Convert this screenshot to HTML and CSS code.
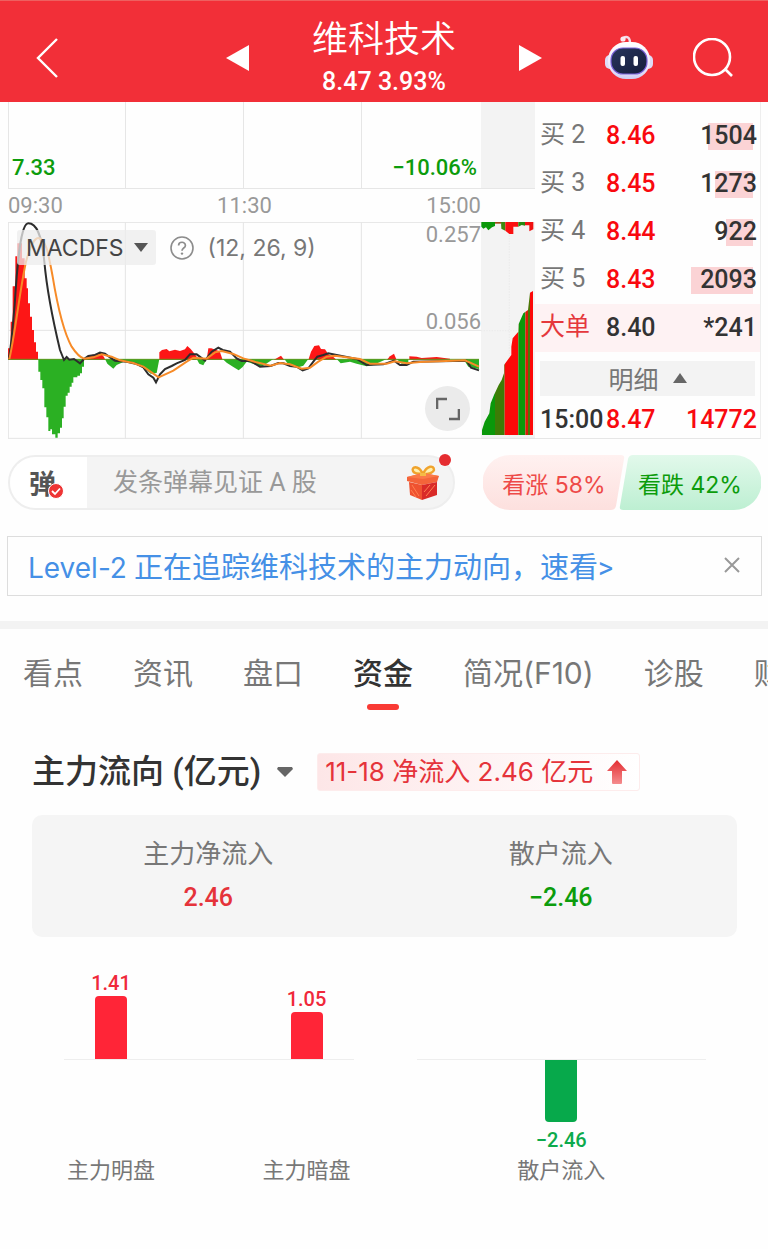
FILE: index.html
```html
<!DOCTYPE html>
<html lang="zh-CN">
<head>
<meta charset="UTF-8" />
<meta name="viewport" content="width=device-width, initial-scale=1" />
<title>维科技术 8.47 3.93%</title>
<link rel="stylesheet" href="styles.css">
</head>
<body>

<header class="topbar">
    <button class="icon-btn back" aria-label="返回">
        <svg width="24" height="40" viewBox="0 0 24 40"><path d="M22 1L3 20L22 39" fill="none" stroke="#fff" stroke-width="2.4"/></svg>
    </button>
    <div class="switcher">
        <button class="icon-btn" aria-label="上一只">
            <svg width="24" height="26" viewBox="0 0 24 26"><path d="M23 0V26L0 13Z" fill="#fff"/></svg>
        </button>
        <div class="stock">
            <h1>维科技术</h1>
            <p>8.47 3.93%</p>
        </div>
        <button class="icon-btn" aria-label="下一只">
            <svg width="24" height="26" viewBox="0 0 24 26"><path d="M1 0V26L24 13Z" fill="#fff"/></svg>
        </button>
    </div>
    <div class="actions">
        <button class="icon-btn" aria-label="智能助手">
            <svg width="48" height="46" viewBox="0 0 48 46">
                <defs>
                    <linearGradient id="head" x1="0" y1="0" x2="0" y2="1"><stop offset="0" stop-color="#fff"/><stop offset=".7" stop-color="#ece6fb"/><stop offset="1" stop-color="#cfcdf3"/></linearGradient>
                    <linearGradient id="face" x1="0" y1="0" x2="1" y2="1"><stop offset="0" stop-color="#28365c"/><stop offset="1" stop-color="#151b3b"/></linearGradient>
                </defs>
                <path d="M18 3C22 1 25 2 25 8" fill="none" stroke="#f3dcea" stroke-width="2.4"/>
                <circle cx="18" cy="4" r="2.6" fill="#fbe9f0"/>
                <rect x="0" y="20" width="10" height="14" rx="5" fill="#dfdcf6"/>
                <rect x="38" y="20" width="10" height="14" rx="5" fill="#dfdcf6"/>
                <rect x="3" y="7" width="42" height="37" rx="18" fill="url(#head)"/>
                <rect x="6" y="13" width="36" height="26" rx="12" fill="url(#face)" stroke="#7a62d8" stroke-width="1.2"/>
                <rect x="15.500" y="21" width="4.500" height="10" rx="2" fill="#fff"/>
                <rect x="28.500" y="21" width="4.500" height="10" rx="2" fill="#fff"/>
            </svg>
        </button>
        <button class="icon-btn" aria-label="搜索">
            <svg width="40" height="40" viewBox="0 0 40 40"><circle cx="19" cy="19" r="18" fill="none" stroke="#fff" stroke-width="2.6"/><path d="M32 31L39 38" stroke="#fff" stroke-width="2.6"/></svg>
        </button>
    </div>
</header>

<section class="market">
    <div class="charts">
        <div class="price-chart">
            <svg class="fill" viewBox="0 0 473 87" preserveAspectRatio="none">
                <path d="M.5 0V87M117.5 0V87M235.5 0V87M353.5 0V87M0 86.5H473" fill="none" stroke="#e6e6e6"/>
            </svg>
            <span class="low">7.33</span>
            <span class="low">−10.06%</span>
        </div>
        <div class="side side-top"></div>
        <div class="times"><span>09:30</span><span>11:30</span><span>15:00</span></div>
        <div class="macd-chart">
            <svg class="fill" viewBox="24 21 1419 651" preserveAspectRatio="none">
                <path d="M25 22V671M376 22V671M730 22V671M1084 22V671M24 22H1443M24 346H1443M24 670H1443" fill="none" stroke="#e4e4e4" stroke-width="3"/>
                <g fill="#fd1616">
                    <path d="M24 435V400H32V320H38V214H46V124H52V85H66V130H74V190H80V220H84V265H90V305H96V345H102V382H108V410H114V435Z"/>
                    <path d="M252 435L262 423L285 418H305L312 426L316 435Z"/>
                    <path d="M478 435V412L486 405L500 402L508 409L525 404L540 408L555 403L562 393L572 402L580 412L590 425V435Z"/>
                    <path d="M620 435L625 400H634L650 406L660 412L668 435Z"/>
                    <path d="M820 435L830 430L843 422L853 435Z"/>
                    <path d="M925 435L933 410L943 393L957 391L963 402L975 403L985 418L1000 426L1010 435Z"/>
                    <path d="M1160 435L1170 424L1182 416L1190 435Z"/>
                    <path d="M1228 435V424L1250 425L1265 429L1310 426L1350 431V435Z"/>
                </g>
                <g fill="#2bb023">
                    <path d="M115 432V470H121V495H127V520H133V577H139V607H145V648H151V643H156V658H166V668H173V655H180V638H186V610H191V575H197V542H203V533H209V515H215V503H220V487H232V482H240V475H246V455H252V432Z"/>
                    <path d="M315 432L322 446L340 461L350 450L370 441L400 442L420 450L440 465L452 476L470 474L478 432Z"/>
                    <path d="M590 432L598 446L610 451L620 432Z"/>
                    <path d="M668 432L680 443L700 456L716 466L728 456L740 440L770 450L785 455L820 432Z"/>
                    <path d="M853 432L862 444L880 450L890 458L910 452L925 432Z"/>
                    <path d="M1010 432L1022 445L1050 440L1070 446L1100 454L1120 450L1160 432Z"/>
                    <path d="M1190 432L1205 446L1225 444V432Z"/>
                    <path d="M1390 432L1405 455L1437 462V432Z"/>
                </g>
                <path d="M24 433H1437" stroke="#5f9a24" stroke-width="3"/>
                <path d="M26 430C34 400 38 330 44 270C52 140 62 25 85 25C110 25 125 60 133 140C142 240 162 330 180 405L192 435L200 426L208 434L222 432L240 445L252 432L265 423L285 420L300 413L315 416L330 427L345 437L380 440L410 447L430 457L445 478L460 488L468 502L480 478L495 462L515 453L530 445L555 435L570 418L590 418L615 437L635 410L655 398L668 405L690 410L710 430L725 438L750 437L780 455L812 453L835 444L850 445L870 453L890 455L908 466L925 460L940 440L952 425L970 420L985 415L1010 420L1070 432L1100 450L1150 448L1182 437L1200 450L1220 450L1240 440L1400 437L1413 458L1437 466" fill="none" stroke="#2d2d2d" stroke-width="6"/>
                <path d="M28 432C45 360 60 220 78 140C92 90 102 70 115 69C138 70 146 120 158 185C172 270 190 350 215 395C228 415 240 427 252 431L280 427L305 418L335 425L360 436L400 444L430 455L476 487L520 467L560 440L580 428L620 431L645 412L665 408L700 417L730 430L770 442L812 452L840 444L870 448L905 461L930 458L955 440L980 425L1005 422L1080 432L1110 446L1160 446L1185 439L1220 445L1260 441L1395 436L1437 455" fill="none" stroke="#f78b28" stroke-width="6"/>
            </svg>
            <div class="indicator">
                <button class="indicator-name">MACDFS
                    <svg width="14" height="9" viewBox="0 0 14 9"><path d="M0 0H14L7 9Z" fill="#555"/></svg>
                </button>
                <button class="icon-btn help" aria-label="指标说明">
                    <svg width="24" height="24" viewBox="0 0 24 24"><circle cx="12" cy="12" r="11" fill="none" stroke="#8c8c8c" stroke-width="1.6"/><path d="M8.600 9.500C8.600 5.200 15.400 5.200 15.400 9.400C15.400 12 12 12 12 14.700" fill="none" stroke="#8c8c8c" stroke-width="1.700"/><circle cx="12" cy="17.600" r="1.200" fill="#8c8c8c"/></svg>
                </button>
                <span>(12, 26, 9)</span>
            </div>
            <span class="scale scale-top">0.257</span>
            <span class="scale scale-mid">0.056</span>
            <button class="expand" aria-label="全屏">
                <svg width="24" height="24" viewBox="0 0 24 24"><path d="M1 12V2H11M23 12V22H13" fill="none" stroke="#666" stroke-width="2.600"/></svg>
            </button>
        </div>
        <div class="side">
            <svg class="fill" viewBox="33 366 162 651" preserveAspectRatio="none">
                <defs>
                    <clipPath id="volume"><path d="M36 1005V990L44 965L58 940L62 910L72 885L86 855L95 840L102 820V795L124 765V740L128 715L145 695L146 672L160 640L174 630L180 578L189 573V1005Z"/></clipPath>
                </defs>
                <path d="M118 366V1015M33 692H195" stroke="#e6e6e6" stroke-width="2" stroke-dasharray="4 4"/>
                <path d="M33 1015H195" stroke="#e0e0e0" stroke-width="3"/>
                <path d="M34 366H75V378L66 382L55 391L48 382L40 386L34 380Z" fill="#0a980a"/>
                <path d="M75 366H93V371H75Z" fill="#a04a1a"/>
                <path d="M93 366H106V392L94 386Z" fill="#3c8a0e"/>
                <path d="M106 366H145V380H130V402L118 402L106 392Z" fill="#fb1010"/>
                <path d="M145 366H165V377L155 375L145 380Z" fill="#258a12"/>
                <path d="M165 366H190V388L178 394V376H165Z" fill="#f01010"/>
                <g clip-path="url(#volume)">
                    <path d="M34 560H75V1005H34Z" fill="#0a980a"/>
                    <path d="M75 560H104V1005H75Z" fill="#3d7c06"/>
                    <path d="M104 560H145V1005H104Z" fill="#fc0808"/>
                    <path d="M145 560H166V1005H145Z" fill="#0a980a"/>
                    <path d="M166 560H174V1005H166Z" fill="#d91c08"/>
                    <path d="M174 560H180V1005H174Z" fill="#4c7706"/>
                    <path d="M180 560H190V1005H180Z" fill="#fc0808"/>
                </g>
            </svg>
        </div>
    </div>

    <div class="book">
        <table class="orders">
            <tr><th scope="row">买 2</th><td>8.46</td><td class="qty"><i style="width: 45px"></i><b>1504</b></td></tr>
            <tr><th scope="row">买 3</th><td>8.45</td><td class="qty"><i style="width: 38px"></i><b>1273</b></td></tr>
            <tr><th scope="row">买 4</th><td>8.44</td><td class="qty"><i style="width: 27px"></i><b>922</b></td></tr>
            <tr><th scope="row">买 5</th><td>8.43</td><td class="qty"><i style="width: 62px"></i><b>2093</b></td></tr>
            <tr class="big"><th scope="row">大单</th><td>8.40</td><td class="qty"><b>*241</b></td></tr>
        </table>
        <button class="detail">明细
            <svg width="14" height="10" viewBox="0 0 14 10"><path d="M0 10H14L7 0Z" fill="#666"/></svg>
        </button>
        <table class="orders trades">
            <tr><th scope="row">15:00</th><td>8.47</td><td class="qty"><b>14772</b></td></tr>
        </table>
    </div>
</section>

<section class="social">
    <div class="danmu">
        <button class="danmu-toggle" aria-label="弹幕开关">弹
            <svg class="check" width="16" height="16" viewBox="0 0 16 16"><circle cx="8" cy="8" r="7.500" fill="#ee3434" stroke="#fff"/><path d="M4 8L7 11L12 5.500" fill="none" stroke="#fff" stroke-width="1.800"/></svg>
        </button>
        <input type="text" aria-label="弹幕" placeholder="发条弹幕见证 A 股">
        <button class="icon-btn gift" aria-label="礼物">
            <svg width="34" height="36" viewBox="0 0 34 36">
                <path d="M17 9C12 -1 5 2 7 6C8 9 13 9 17 9C21 9 27 9 28 5C28 0 21 0 17 9Z" fill="#fff0b0" stroke="#f0a32c" stroke-width="2.400"/>
                <path d="M1 12L17 8L33 11L31 17L16 20L1 16Z" fill="#f4643a"/>
                <path d="M3 17L16 20V35L4 30Z" fill="#ef5230"/>
                <path d="M16 20L31 17L31 30L16 35Z" fill="#d92a28"/>
                <path d="M1 12L17 8L33 11L17 14Z" fill="#fb7a48"/>
                <path d="M6 20L13 31M5 25L10 32M29 20L20 31M24 20L18 27" stroke="#ff8050" stroke-width="1"/>
                <path d="M14 8H20V11H14Z" fill="#f5bb45"/>
            </svg>
        </button>
        <span class="dot"></span>
    </div>
    <div class="votes">
        <button class="vote up">
            <svg class="fill" viewBox="0 0 142 55" preserveAspectRatio="none">
                <defs><linearGradient id="pink" x1="0" y1="0" x2="0" y2="1"><stop offset="0" stop-color="#fff1f0"/><stop offset="1" stop-color="#fde0de"/></linearGradient></defs>
                <path d="M27 0H138Q142 0 141 4L133 51Q132 55 128 55H27A27 27 0 0 1 27 0Z" fill="url(#pink)"/>
            </svg>
            <span>看涨 58%</span>
        </button>
        <button class="vote down">
            <svg class="fill" viewBox="0 0 142 55" preserveAspectRatio="none">
                <defs><linearGradient id="mint" x1="0" y1="0" x2="0" y2="1"><stop offset="0" stop-color="#e2f9eb"/><stop offset="1" stop-color="#bdefd2"/></linearGradient></defs>
                <path d="M14 0H115A27 27 0 0 1 115 55H4Q0 55 1 51L9 4Q10 0 14 0Z" fill="url(#mint)"/>
            </svg>
            <span>看跌 42%</span>
        </button>
    </div>
</section>

<section class="notice">
    <a href="#level2"><span class="latin">Level-2</span> 正在追踪维科技术的主力动向，速看&gt;</a>
    <button class="icon-btn" aria-label="关闭">
        <svg width="16" height="16" viewBox="0 0 16 16"><path d="M1 1L15 15M15 1L1 15" stroke="#999" stroke-width="2"/></svg>
    </button>
</section>

<nav class="tabs">
    <a href="#kandian">看点</a>
    <a href="#zixun">资讯</a>
    <a href="#pankou">盘口</a>
    <a href="#zijin" class="active">资金</a>
    <a href="#jiankuang">简况(F10)</a>
    <a href="#zhengu">诊股</a>
    <a href="#caiwu">财</a>
</nav>

<main class="fund">
    <div class="fund-head">
        <button class="fund-title">主力流向 (亿元)
            <svg width="16" height="10" viewBox="0 0 16 10"><path d="M1 0H15L16 2L8 10L0 2Z" fill="#666"/></svg>
        </button>
        <p class="tag">11-18 净流入 2.46 亿元
            <svg width="20" height="24" viewBox="0 0 20 24">
                <defs><linearGradient id="arrow" x1="0" y1="0" x2="0" y2="1"><stop offset="0" stop-color="#e32c30"/><stop offset="1" stop-color="#f58c8e"/></linearGradient></defs>
                <path d="M10 0L20 11H15V23Q15 24 14 24H6Q5 24 5 23V11H0Z" fill="url(#arrow)"/>
            </svg>
        </p>
    </div>

    <dl class="summary">
        <div><dt>主力净流入</dt><dd class="red">2.46</dd></div>
        <div><dt>散户流入</dt><dd class="green">−2.46</dd></div>
    </dl>

    <div class="flows">
        <div class="flow">
            <div class="above">
                <div class="col"><span>1.41</span><div class="bar" style="height: 63px"></div></div>
                <div class="col"><span>1.05</span><div class="bar" style="height: 47px"></div></div>
            </div>
            <div class="below"></div>
            <div class="names"><span>主力明盘</span><span>主力暗盘</span></div>
        </div>
        <div class="flow single">
            <div class="above"></div>
            <div class="below">
                <div class="col"><div class="bar" style="height: 62px"></div><span>−2.46</span></div>
            </div>
            <div class="names"><span>散户流入</span></div>
        </div>
    </div>
</main>

</body>
</html>
```
FILE: styles.css
```css
* {
    box-sizing: border-box;
}
body {
    margin: 0;
    background: #fefefe;
    color: #333;
    font-family: Roboto, "Noto Sans CJK SC", sans-serif;
    overflow-x: hidden;
}
h1, p, dl, dd {
    margin: 0;
}
button {
    background: none;
    border: none;
    padding: 0;
    color: inherit;
    font-family: inherit;
    cursor: pointer;
}
a {
    text-decoration: none;
}
svg {
    display: block;
    flex-shrink: 0;
}
.icon-btn {
    display: flex;
    align-items: center;
    justify-content: center;
}
.fill {
    position: absolute;
    top: 0;
    left: 0;
    width: 100%;
    height: 100%;
}
.red {
    color: #e5333a;
}
.green {
    color: #0c9c0c;
}

/* top bar */
.topbar {
    display: grid;
    grid-template-columns: 1fr auto 1fr;
    align-items: center;
    height: 102px;
    padding: 12px 35px 0;
    border-top: 1px solid #ee6060;
    background: #f22f38;
    color: #fff;
}
.back {
    justify-self: start;
}
.switcher {
    display: flex;
    align-items: center;
    gap: 62px;
}
.stock {
    text-align: center;
}
.stock h1 {
    font-size: 36px;
    font-weight: 350;
    line-height: 48px;
}
.stock p {
    font-size: 25px;
    font-weight: 500;
    line-height: 36px;
}
.actions {
    display: flex;
    align-items: center;
    justify-content: flex-end;
    gap: 40px;
}

/* charts and order book */
.market {
    display: flex;
    margin: 0 7px 0 8px;
}
.charts {
    flex: 1;
    display: grid;
    grid-template-columns: 473fr 54fr;
    grid-template-rows: 87px 33px 217px;
}
.price-chart {
    position: relative;
    display: flex;
    justify-content: space-between;
    align-items: flex-end;
    padding: 0 4px 6px;
}
.low {
    position: relative;
    color: #0c9c0c;
    font-size: 22px;
    font-weight: 500;
    line-height: 30px;
}
.side {
    position: relative;
    background: #f3f3f3;
}
.side-top {
    border-bottom: 1px solid #e6e6e6;
}
.times {
    grid-column: 1;
    display: flex;
    justify-content: space-between;
    align-items: center;
    color: #999;
    font-size: 22px;
}
.macd-chart {
    position: relative;
    grid-column: 1;
}
.indicator {
    position: absolute;
    top: 8px;
    left: 9px;
    display: flex;
    align-items: center;
    gap: 14px;
    color: #777;
    font-family: Inter, sans-serif;
    font-size: 23px;
}
.indicator-name {
    display: flex;
    align-items: center;
    gap: 10px;
    height: 35px;
    padding: 0 8px 0 9px;
    border-radius: 3px;
    background: rgba(236, 236, 236, 0.75);
    color: #444;
    font-size: 23px;
}
.scale {
    position: absolute;
    right: 0;
    color: #999;
    font-size: 22px;
    line-height: 24px;
}
.scale-top {
    top: 1px;
}
.scale-mid {
    top: 88px;
}
.expand {
    position: absolute;
    right: 11px;
    bottom: 8px;
    display: flex;
    align-items: center;
    justify-content: center;
    width: 45px;
    height: 45px;
    border-radius: 50%;
    background: #ebebeb;
}
.book {
    flex: 0 0 226px;
    padding-top: 10px;
    border-right: 1px solid #eee;
    border-bottom: 1px solid #e6e6e6;
}
.orders {
    width: 100%;
    border-collapse: collapse;
    table-layout: fixed;
    font-size: 25px;
    font-weight: 500;
    line-height: 30px;
}
.orders th, .orders td {
    height: 48px;
    padding: 0;
    text-align: left;
}
.orders th {
    width: 71px;
    padding: 0 0 3px 5px;
    color: #777;
    font-weight: 400;
}
.orders td {
    color: #f9090f;
}
.orders .qty {
    position: relative;
    padding-right: 3px;
    color: #333;
    text-align: right;
}
.qty b {
    position: relative;
    font-weight: 500;
}
.qty i {
    position: absolute;
    top: 11px;
    right: 7px;
    height: 27px;
    background: #fbd3d5;
}
.big {
    background: #fef2f3;
}
.orders .big th {
    color: #e5383c;
}
.orders .big td {
    color: #333;
}
.detail {
    display: flex;
    align-items: center;
    justify-content: center;
    gap: 14px;
    width: 215px;
    height: 35px;
    margin: 9px 5px 6px;
    padding-bottom: 2px;
    background: #f3f3f3;
    color: #777;
    font-size: 25px;
}
.trades th, .trades td {
    height: 36px;
}
.orders.trades th {
    padding-bottom: 0;
    color: #333;
    font-weight: 500;
}
.orders.trades .qty {
    color: #f9090f;
}

/* bullet comments and votes */
.social {
    display: flex;
    gap: 28px;
    padding: 16px 7px 0 8px;
}
.danmu {
    position: relative;
    flex: 1;
    min-width: 0;
    display: flex;
    height: 55px;
    border: 2px solid #eee;
    border-radius: 28px;
    background: #f4f4f4;
}
.danmu-toggle {
    position: relative;
    flex-shrink: 0;
    width: 77px;
    padding-right: 12px;
    border-radius: 26px 0 0 26px;
    background: #fff;
    color: #555;
    font-size: 27px;
    font-weight: 700;
}
.check {
    position: absolute;
    left: 38px;
    bottom: 9px;
}
.danmu input {
    flex: 1;
    min-width: 0;
    padding: 0 0 0 26px;
    border: none;
    outline: none;
    background: none;
    font-family: inherit;
    font-size: 25px;
}
.danmu input::placeholder {
    color: #999;
}
.gift {
    margin-right: 13px;
}
.dot {
    position: absolute;
    top: -3px;
    right: 2px;
    width: 12px;
    height: 12px;
    border-radius: 50%;
    background: #e52c30;
}
.votes {
    display: flex;
}
.vote {
    position: relative;
    width: 142px;
    height: 55px;
    font-family: Inter, "Noto Sans CJK SC", sans-serif;
    font-size: 23px;
}
.vote span {
    position: relative;
}
.up {
    color: #ee4a48;
}
.down {
    margin-left: -6px;
    color: #0c9c0c;
}

/* level-2 notice */
.notice {
    display: flex;
    align-items: center;
    justify-content: space-between;
    height: 60px;
    margin: 26px 6px 0 7px;
    padding: 0 21px 2px 20px;
    border: 1px solid #ddd;
}
.notice a {
    color: #4590e6;
    font-size: 29px;
}
.latin {
    font-family: Inter, sans-serif;
    font-size: 28px;
}

/* tabs */
.tabs {
    display: flex;
    gap: 50px;
    margin-top: 25px;
    padding: 20px 0 0 23px;
    border-top: 8px solid #f3f3f3;
    overflow: hidden;
    white-space: nowrap;
}
.tabs a {
    flex-shrink: 0;
    color: #777;
    font-family: Inter, "Noto Sans CJK SC", sans-serif;
    font-size: 30px;
    line-height: 48px;
}
.tabs .active {
    color: #333;
    font-weight: 500;
}
.active::after {
    content: "";
    display: block;
    width: 32px;
    height: 6px;
    margin: 7px auto 0;
    border-radius: 3px;
    background: #f93a34;
}

/* fund flow */
.fund {
    padding: 43px 31px 60px 32px;
}
.fund-head {
    display: flex;
    align-items: center;
    gap: 24px;
}
.fund-title {
    display: flex;
    align-items: center;
    gap: 16px;
    color: #333;
    font-size: 33px;
    font-weight: 500;
    line-height: 38px;
}
.tag {
    display: flex;
    align-items: center;
    gap: 14px;
    height: 38px;
    padding: 0 12px 0 7px;
    border: 1px solid #fdecec;
    border-radius: 3px;
    background: linear-gradient(90deg, #fde6e7, #fff);
    color: #e5333a;
    font-family: Inter, "Noto Sans CJK SC", sans-serif;
    font-size: 26px;
    line-height: 34px;
}
.summary {
    display: grid;
    grid-template-columns: 1fr 1fr;
    margin-top: 24px;
    padding: 17px 0;
    border-radius: 10px;
    background: #f5f5f5;
    text-align: center;
}
.summary dt {
    color: #777;
    font-size: 26px;
    line-height: 44px;
}
.summary dd {
    font-size: 25px;
    font-weight: 500;
    line-height: 44px;
}
.flows {
    display: grid;
    grid-template-columns: 1fr 1fr;
}
.flow {
    padding: 0 31px 0 32px;
}
.above, .below, .names {
    display: flex;
    justify-content: space-between;
    padding: 0 3px;
}
.single .above, .single .below, .single .names {
    justify-content: center;
}
.above {
    align-items: flex-end;
    height: 123px;
    border-bottom: 1px solid #eee;
    color: #f0283a;
}
.below {
    height: 95px;
    color: #0caa4c;
}
.col {
    width: 88px;
    font-size: 20px;
    font-weight: 500;
    line-height: 26px;
    text-align: center;
}
.col span {
    display: block;
}
.bar {
    width: 32px;
    margin: 0 auto;
    border-radius: 4px 4px 0 0;
    background: #ff2537;
}
.below .bar {
    margin-bottom: 5px;
    border-radius: 0 0 4px 4px;
    background: #07a94b;
}
.names {
    color: #777;
    font-size: 22px;
    line-height: 32px;
}
```
